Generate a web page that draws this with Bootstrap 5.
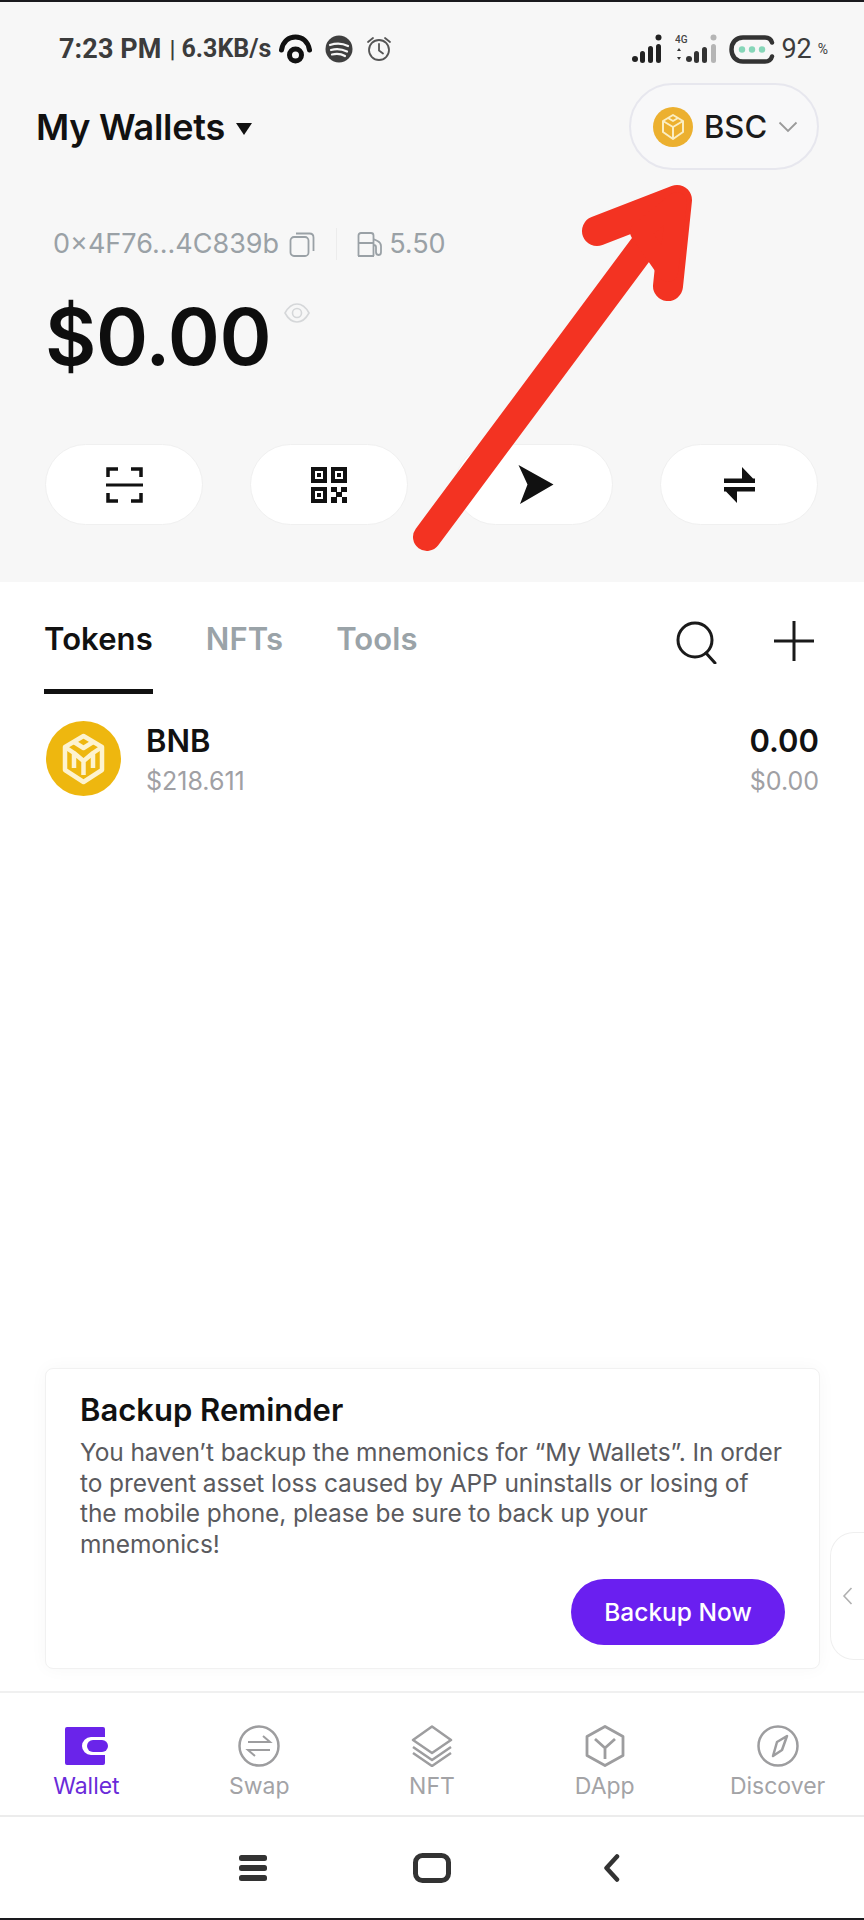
<!doctype html>
<html lang="en">
<head>
<meta charset="utf-8">
<title>My Wallets</title>
<link href="https://cdn.jsdelivr.net/npm/bootstrap@5.3.0/dist/css/bootstrap.min.css" rel="stylesheet">
<style>
html,body{margin:0;background:#fff}
body{font-family:Inter,"Noto Sans",sans-serif;color:#111}
.app-shell{width:864px;height:1920px;overflow:hidden;border-top:2px solid #1a1a1e;border-bottom:2px solid #1a1a1e;background:#fff}
.wallet-head{height:580px;background:#f7f7f7;flex:none}
.status-row{height:62px;padding:32px 36px 0 59px;color:#3c3c3c;font-family:Roboto,"Liberation Sans",sans-serif}
.st-time{font-size:27px;font-weight:700;line-height:30px;letter-spacing:.1px}
.st-sep{font-size:24px;font-weight:500;margin:0 6px 0 8px;line-height:30px}
.st-speed{font-size:25px;font-weight:700;line-height:30px;letter-spacing:0;margin-right:8px}
.st-batt{font-size:27px;line-height:30px;font-weight:400;margin-left:6px}
.st-pct{font-size:14px;font-weight:400;margin-left:6px;line-height:30px;align-self:flex-end}
.title-row{padding:19px 45px 0 36px}
.wallet-title{font-size:36px;font-weight:600;line-height:44px;letter-spacing:-.25px;color:#111}
.caret-mark{width:0;height:0;border-left:8.5px solid transparent;border-right:8.5px solid transparent;border-top:12px solid #111;margin-left:11px;margin-top:5px}
.chain-pill{width:190px;height:87px;border:2px solid #e7e7ee;border-radius:44px;padding-left:22px;background:#f8f8f9}
.chain-name{font-size:31px;font-weight:500;line-height:36px;margin-left:11px;color:#1b1b1b}
.addr-row{padding:57px 0 0 53px;color:#9aa1a6;font-size:27px;line-height:34px}
.addr-rule{width:1px;height:32px;background:#ececec;margin:0 20px 0 21px}
.balance-row{padding:27px 0 0 45px}
.balance-num{font-size:79px;font-weight:600;line-height:96px;color:#0e0e0e;letter-spacing:-.5px}
.eye-mark{margin:14px 0 0 13px}
.action-row{padding:60px 45px 0 45px;gap:47px}
.action-pill{width:158px;height:81px;border-radius:41px;background:#fff;border:1px solid #f0f0f0;padding:0}
.tab-row{padding:35px 50px 0 44px;height:112px;flex:none}
.tab-item{font-size:31px;font-weight:600;line-height:44px;color:#9aa3a8;height:77px;margin-right:53px;border-bottom:5px solid transparent;letter-spacing:.1px}
.tab-item.is-on{color:#111;border-bottom-color:#111}
.tab-tool{margin-top:4px}
.token-row{padding:27px 45px 0 46px}
.token-main{font-size:31px;font-weight:600;line-height:36px;color:#111}
.token-sub{font-size:25px;font-weight:400;line-height:36px;color:#a0a0a4;margin-top:4px}
.token-text{margin-left:25px}
.token-col{margin-top:2px}
.reminder-box{margin:0 44px 1px 45px;height:301px;border:1px solid #f1f1f1;border-radius:8px;box-shadow:0 0 18px rgba(0,0,0,.035);padding:21px 34px 0 34px;flex:none}
.reminder-title{font-size:31px;font-weight:600;line-height:40px;margin:0;color:#111}
.reminder-body{font-size:24.5px;line-height:30.6px;color:#5a5a5e;margin:7px 0 0 0;width:704px;letter-spacing:-.1px}
.backup-btn{width:214px;height:66px;border-radius:33px;background:#6a1ff0;color:#fff;font-size:24.5px;font-weight:500;border:0;padding:0;margin-top:20px}
.backup-btn:hover{background:#6a1ff0;color:#fff}
.side-handle{right:0;top:1530px;width:34px;height:128px;background:#fff;border-radius:24px 0 0 24px;border:1px solid #efefef;border-right:0}
.tab-bar{margin-top:21px;height:126px;border-top:2px solid #f0f0f0;border-bottom:2px solid #ececec;flex:none}
.bar-item{height:100%;padding-top:32px;color:#a3a3a6;font-size:23px;line-height:30px}
.bar-item svg{height:42px;margin-bottom:4px}
.bar-item.is-on{color:#6a2bd9}
.soft-keys{height:101px;padding:0 0 0 239px;flex:none}
.arrow-layer{left:0;top:0;pointer-events:none}
</style>
</head>
<body>
<div class="app-shell d-flex flex-column position-relative">
  <div class="wallet-head">
    <div class="status-row d-flex align-items-center justify-content-between">
      <div class="d-flex align-items-center">
        <span class="st-time">7:23 PM</span><span class="st-sep">|</span><span class="st-speed">6.3KB/s</span>
        <svg width="33" height="30" viewBox="0 0 33 30"><path d="M2.5 16C4 7 10 3 16.500 3S29 7 30.500 16" fill="none" stroke="#111" stroke-width="5" stroke-linecap="round"/><circle cx="16.500" cy="21" r="6" fill="none" stroke="#111" stroke-width="5"/></svg>
        <svg style="margin-left:13px" width="28" height="28" viewBox="0 0 28 28"><circle cx="14" cy="14" r="13.500" fill="#3f3f3f"/><path d="M5 10c6-2 13-1.500 18 1M6 15c5-1.500 11-1 16 1.500M7 19.500c4-1 9-.8 13 1.500" fill="none" stroke="#f7f7f7" stroke-width="2.200" stroke-linecap="round"/></svg>
        <svg style="margin-left:13px" width="26" height="26" viewBox="0 0 26 26"><circle cx="13" cy="14" r="10" fill="none" stroke="#555" stroke-width="1.800"/><path d="M13 8v6.500l4 3M2 6l5-4M24 6l-5-4" fill="none" stroke="#555" stroke-width="1.800" stroke-linecap="round"/></svg>
      </div>
      <div class="d-flex align-items-center">
        <svg width="30" height="30" viewBox="0 0 30 30" fill="#222"><circle cx="3" cy="25" r="3"/><rect x="8" y="17" width="5" height="12" rx="2.500"/><rect x="16" y="12" width="5" height="17" rx="2.500"/><rect x="24" y="10" width="5" height="19" rx="2.500"/><circle cx="26.500" cy="3.500" r="3"/></svg>
        <svg style="margin-left:13px" width="42" height="30" viewBox="0 0 42 30"><text x="0" y="9" font-family="Roboto,'Liberation Sans',sans-serif" font-size="10" font-weight="500" fill="#444">4G</text><g fill="#333"><path d="M2 17l2-3 2 3zM2 23l2 3 2-3z"/><circle cx="14" cy="25" r="3"/><rect x="19" y="17" width="5" height="12" rx="2.500"/><rect x="27" y="13" width="5" height="16" rx="2.500"/></g><rect x="36" y="10" width="5" height="19" rx="2.500" fill="#b5b5b5"/><circle cx="38.500" cy="3.500" r="3" fill="#b5b5b5"/></svg>
        <svg style="margin-left:12px" width="46" height="29" viewBox="0 0 46 29"><path d="M43 7.500C42 4 39 2.500 36 2.500H14C7 2.500 2.500 7.500 2.500 14.500S7 26.500 14 26.500H36C39 26.500 42 25 43 21.500" fill="none" stroke="#333" stroke-width="4.500" stroke-linecap="round"/><g fill="#86d6b8"><circle cx="13" cy="14.500" r="3.200"/><circle cx="23" cy="14.500" r="3.200"/><circle cx="33" cy="14.500" r="3.200"/></g></svg>
        <span class="st-batt">92</span><span class="st-pct">%</span>
      </div>
    </div>

    <div class="title-row d-flex align-items-center justify-content-between">
      <div class="d-flex align-items-center">
        <span class="wallet-title">My Wallets</span><span class="caret-mark"></span>
      </div>
      <div class="chain-pill d-flex align-items-center">
        <svg width="40" height="40" viewBox="0 0 40 40"><circle cx="20" cy="20" r="20" fill="#ecb02f"/><g fill="none" stroke="#fbeec2" stroke-width="2" stroke-linejoin="round"><path d="M20 8l10 6v11l-10 7-10-7V14z"/><path d="M10 14l10 6 10-6M20 20v12M15 11l5 3 5-3"/></g></svg>
        <span class="chain-name">BSC</span>
        <svg style="margin-left:11px" width="20" height="12" viewBox="0 0 20 12"><path d="M1.500 1.500L10 10l8.500-8.500" fill="none" stroke="#9a9a9a" stroke-width="1.800"/></svg>
      </div>
    </div>

    <div class="addr-row d-flex align-items-center">
      <span>0×4F76...4C839b</span>
      <svg style="margin-left:10px" width="26" height="25" viewBox="0 0 26 25"><rect x="1.500" y="5" width="18" height="19" rx="3.500" fill="none" stroke="#9aa1a6" stroke-width="1.800"/><path d="M7 1.500h13.500c2.500 0 4 1.500 4 4V19" fill="none" stroke="#9aa1a6" stroke-width="1.800"/></svg>
      <span class="addr-rule"></span>
      <svg width="27" height="25" viewBox="0 0 27 25"><path d="M1.500 24V3.500C1.500 2 2.500 1 4 1h10c1.500 0 2.500 1 2.500 2.500V24M1 24h16M1.500 11h15M16.500 7l4 2c2 1 3.500 2.500 3.500 5v6c0 2-1 3-2.300 3S19 22 19 20v-5c0-1.500-1-2-2.500-2" fill="none" stroke="#9aa1a6" stroke-width="1.800"/></svg>
      <span style="margin-left:5px">5.50</span>
    </div>

    <div class="balance-row d-flex align-items-start">
      <span class="balance-num">$0.00</span>
      <svg class="eye-mark" width="26" height="22" viewBox="0 0 26 22"><path d="M1 11c3-5.500 7-9 12-9s9 3.500 12 9c-3 5.500-7 9-12 9S4 16.500 1 11z" fill="none" stroke="#d5d7d9" stroke-width="1.600"/><circle cx="13" cy="11" r="4.500" fill="none" stroke="#d5d7d9" stroke-width="1.600"/></svg>
    </div>

    <div class="action-row d-flex">
      <button class="btn action-pill d-flex align-items-center justify-content-center" type="button" aria-label="Scan">
        <svg width="37" height="36" viewBox="0 0 37 36" fill="none" stroke="#111" stroke-width="3.500"><path d="M12 2H2v8M25 2h10v8M2 26v8h10M35 26v8H25"/><path d="M0 18h37" stroke-width="3"/></svg>
      </button>
      <button class="btn action-pill d-flex align-items-center justify-content-center" type="button" aria-label="Receive">
        <svg width="36" height="36" viewBox="0 0 36 36"><g fill="none" stroke="#111" stroke-width="4"><rect x="2" y="2" width="12" height="12"/><rect x="22" y="2" width="12" height="12"/><rect x="2" y="22" width="12" height="12"/></g><g fill="#111"><rect x="6" y="6" width="4" height="4"/><rect x="26" y="6" width="4" height="4"/><rect x="6" y="26" width="4" height="4"/><rect x="20" y="20" width="6" height="5"/><rect x="30" y="20" width="6" height="5"/><rect x="25" y="25" width="6" height="5"/><rect x="20" y="30" width="6" height="6"/><rect x="31" y="30" width="5" height="6"/></g></svg>
      </button>
      <button class="btn action-pill d-flex align-items-center justify-content-center" type="button" aria-label="Send">
        <svg width="38" height="39" viewBox="0 -1 35 39" style="margin-left:3px"><path d="M0 -1L35 18.500 1.500 38 9 18.500z" fill="#111"/></svg>
      </button>
      <button class="btn action-pill d-flex align-items-center justify-content-center" type="button" aria-label="Swap">
        <svg width="31" height="36" viewBox="0 0 31 36" fill="#111"><path d="M0 11.500h31v4.500H0zM18 0l11 11.500H18zM0 20h31v4.500H0zM13 36L2 24.500h11z"/></svg>
      </button>
    </div>
  </div>

  <div class="tab-row d-flex align-items-start">
    <div class="tab-item is-on">Tokens</div>
    <div class="tab-item">NFTs</div>
    <div class="tab-item">Tools</div>
    <svg class="ms-auto tab-tool" width="42" height="43" viewBox="0 0 42 43" fill="none" stroke="#1a1a1a" stroke-width="3"><circle cx="19" cy="19" r="17"/><path d="M30 32l9 10" stroke-linecap="round"/></svg>
    <svg class="tab-tool" style="margin-left:56px" width="40" height="40" viewBox="0 0 40 40" fill="none" stroke="#1a1a1a" stroke-width="3"><path d="M20 0v40M0 20h40"/></svg>
  </div>

  <div class="token-row d-flex align-items-start justify-content-between">
    <div class="d-flex align-items-start">
      <svg width="75" height="75" viewBox="0 0 75 75"><circle cx="37.500" cy="37.500" r="37.500" fill="#eeb70f"/><g fill="none" stroke="#fdf3cf" stroke-width="4.500" stroke-linejoin="round"><path d="M37.500 15L56 26v23L37.500 61 19 49V26z"/><path d="M28 21l9.500 6 9.500-6M19 26l9 6v15M56 26l-9 6v15M28 32l9.500 8 9.500-8M37.500 40v14"/></g></svg>
      <div class="token-text token-col d-flex flex-column">
        <span class="token-main">BNB</span>
        <span class="token-sub">$218.611</span>
      </div>
    </div>
    <div class="token-col d-flex flex-column align-items-end">
      <span class="token-main">0.00</span>
      <span class="token-sub">$0.00</span>
    </div>
  </div>

  <div class="flex-grow-1"></div>

  <div class="reminder-box bg-white">
    <h5 class="reminder-title">Backup Reminder</h5>
    <p class="reminder-body">You haven’t backup the mnemonics for “My Wallets”. In order to prevent asset loss caused by APP uninstalls or losing of the mobile phone, please be sure to back up your mnemonics!</p>
    <div class="d-flex justify-content-end">
      <button class="btn backup-btn" type="button">Backup Now</button>
    </div>
  </div>

  <div class="side-handle position-absolute d-flex align-items-center justify-content-center">
    <svg width="11" height="18" viewBox="0 0 11 18"><path d="M9.500 1L2 9l7.500 8" fill="none" stroke="#b0b0b0" stroke-width="1.600"/></svg>
  </div>

  <div class="tab-bar row g-0">
    <div class="col bar-item is-on d-flex flex-column align-items-center">
      <svg width="44" viewBox="0 0 44 42"><path d="M3 2h36a2 2 0 0 1 2 2v8H27a9 9 0 0 0 0 18h14v8a2 2 0 0 1-2 2H3a2 2 0 0 1-2-2V4a2 2 0 0 1 2-2z" fill="#6a24ea"/><rect x="23" y="15" width="21" height="12" rx="6" fill="#6a24ea"/></svg>
      <span>Wallet</span>
    </div>
    <div class="col bar-item d-flex flex-column align-items-center">
      <svg width="42" viewBox="0 0 42 42" fill="none" stroke="#9d9d9f" stroke-width="2.500"><circle cx="21" cy="21" r="19.500"/><path d="M10 17h22l-7-6M32 25H10l7 6" stroke-width="2"/></svg>
      <span>Swap</span>
    </div>
    <div class="col bar-item d-flex flex-column align-items-center">
      <svg width="42" viewBox="0 0 42 42" fill="none" stroke="#9d9d9f" stroke-width="2.500" stroke-linejoin="round"><path d="M21 1.500L40 15 21 28 2 15z"/><path d="M2 22l19 13 19-13M2 28l19 13 19-13"/></svg>
      <span>NFT</span>
    </div>
    <div class="col bar-item d-flex flex-column align-items-center">
      <svg width="40" viewBox="0 0 40 42" fill="none" stroke="#9d9d9f" stroke-width="2.800" stroke-linejoin="round"><path d="M20 1.500L38 11.500v19L20 40.500 2 30.500v-19z"/><path d="M10 14l10 9 10-9M20 23v11"/></svg>
      <span>DApp</span>
    </div>
    <div class="col bar-item d-flex flex-column align-items-center">
      <svg width="42" viewBox="0 0 42 42" fill="none" stroke="#9d9d9f" stroke-width="2.500" stroke-linejoin="round"><circle cx="21" cy="21" r="19.500"/><path d="M30 11l-5 14-9 6 4-14z"/></svg>
      <span>Discover</span>
    </div>
  </div>

  <div class="soft-keys d-flex align-items-center">
    <svg width="28" height="26" viewBox="0 0 28 26" fill="#333"><rect y="0" width="28" height="6" rx="2.500"/><rect y="10" width="28" height="6" rx="2.500"/><rect y="20" width="28" height="6" rx="2.500"/></svg>
    <svg style="margin-left:146px" width="38" height="30" viewBox="0 0 38 30"><rect x="2.500" y="2.500" width="33" height="25" rx="7" fill="none" stroke="#333" stroke-width="5"/></svg>
    <svg style="margin-left:152px" width="17" height="28" viewBox="0 0 17 28"><path d="M14 2.500L3.500 14 14 25.500" fill="none" stroke="#333" stroke-width="4.500" stroke-linecap="round" stroke-linejoin="round"/></svg>
  </div>

  <svg class="arrow-layer position-absolute" width="864" height="1920" viewBox="0 0 864 1920">
    <g fill="none" stroke="#f33322" stroke-linecap="round" stroke-linejoin="round">
      <path d="M427 535L665 215" stroke-width="28"/>
      <path d="M597 229L677 198 668 284" stroke-width="30"/>
      <path d="M640 230L677 200 668 270z" fill="#f33322" stroke-width="20"/>
    </g>
  </svg>
</div>
<script src="https://cdn.jsdelivr.net/npm/bootstrap@5.3.0/dist/js/bootstrap.bundle.min.js"></script>
</body>
</html>
